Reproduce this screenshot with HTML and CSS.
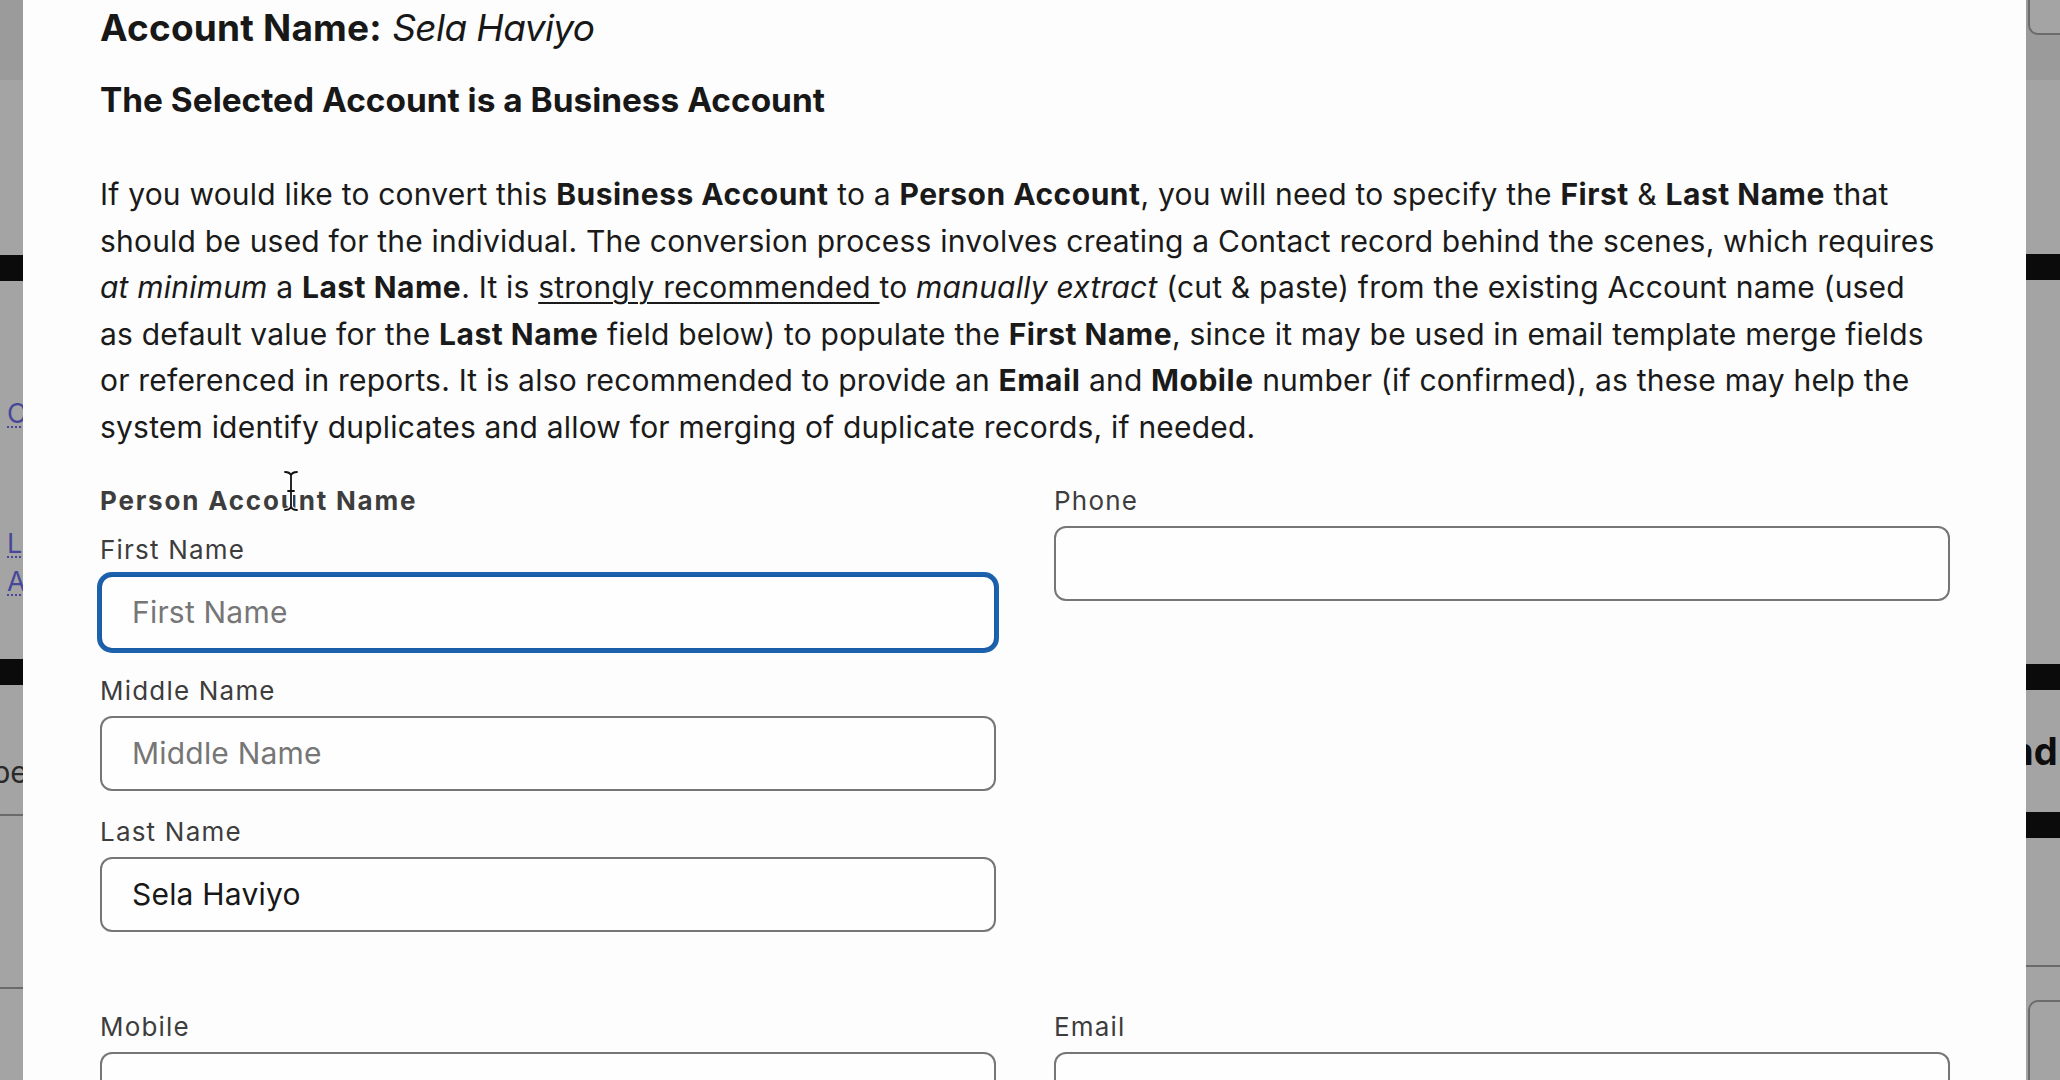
FILE: index.html
```html
<!DOCTYPE html>
<html lang="en">
<head>
<meta charset="utf-8">
<title>Convert Account</title>
<link rel="stylesheet" href="styles.css">
</head>
<body>
<div class="page">
  <aside class="strip strip-left">
    <div class="band"></div>
    <div class="bar bar-1"></div>
    <a class="ghost-link link-c">C</a>
    <a class="ghost-link link-l">L</a>
    <a class="ghost-link link-a">A</a>
    <div class="bar bar-2"></div>
    <div class="ghost-text">pe</div>
    <div class="rule rule-1"></div>
    <div class="rule rule-2"></div>
  </aside>

  <main class="modal">
    <h1 class="title"><strong>Account Name:</strong> <em>Sela Haviyo</em></h1>
    <h2 class="subtitle">The Selected Account is a Business Account</h2>
    <p class="intro">If you would like to convert this <b>Business Account</b> to a <b>Person Account</b>, you will need to specify the <b>First</b> &amp; <b>Last Name</b> that should be used for the individual. The conversion process involves creating a Contact record behind the scenes, which requires <i>at minimum</i> a <b>Last Name</b>. It is <u>strongly recommended </u>to <i>manually extract</i> (cut &amp; paste) from the existing Account name (used as&nbsp;default value for the <b>Last Name</b> field below) to populate the <b>First Name</b>, since it may be used in email template merge fields or referenced in reports. It is also recommended to provide an <b>Email</b> and <b>Mobile</b> number (if confirmed), as these may help the system identify duplicates and allow for merging of duplicate records, if needed.</p>

    <div class="form-grid">
      <div class="col">
        <div class="group-title">Person Account Name</div>
        <div class="field">
          <label class="label" for="fn">First Name</label>
          <input id="fn" class="input focused" type="text" placeholder="First Name">
        </div>
        <div class="field">
          <label class="label" for="mn">Middle Name</label>
          <input id="mn" class="input" type="text" placeholder="Middle Name">
        </div>
        <div class="field">
          <label class="label" for="ln">Last Name</label>
          <input id="ln" class="input" type="text" value="Sela Haviyo">
        </div>
      </div>
      <div class="col">
        <div class="field">
          <label class="label" for="ph">Phone</label>
          <input id="ph" class="input" type="text">
        </div>
      </div>
      <div class="col">
        <div class="field">
          <label class="label" for="mo">Mobile</label>
          <input id="mo" class="input" type="text">
        </div>
      </div>
      <div class="col">
        <div class="field">
          <label class="label" for="em">Email</label>
          <input id="em" class="input" type="text">
        </div>
      </div>
    </div>

    <svg class="cursor" width="18" height="42" viewBox="0 0 18 42" aria-hidden="true">
      <path d="M3 2 C6 2 8 3 9 5 C10 3 12 2 15 2 M9 5 V37 M3 40 C6 40 8 39 9 37 C10 39 12 40 15 40 M6 21 H12" fill="none" stroke="#fff" stroke-width="4" stroke-linecap="round"/>
      <path d="M3 2 C6 2 8 3 9 5 C10 3 12 2 15 2 M9 5 V37 M3 40 C6 40 8 39 9 37 C10 39 12 40 15 40 M6 21 H12" fill="none" stroke="#111" stroke-width="1.8" stroke-linecap="round"/>
    </svg>
  </main>

  <aside class="strip strip-right">
    <div class="band"><div class="ghost-btn top-btn"></div></div>
    <div class="bar bar-1r"></div>
    <div class="bar bar-2r"></div>
    <div class="ghost-bold">nd</div>
    <div class="bar bar-3r"></div>
    <div class="rule rule-3"></div>
    <div class="ghost-btn bottom-btn"></div>
  </aside>
</div>
</body>
</html>
```

FILE: styles.css
```css
* { box-sizing: border-box; }

html, body {
  margin: 0;
  padding: 0;
}

body {
  width: 2060px;
  height: 1080px;
  overflow: hidden;
  background: #a4a4a4;
  font-family: "Inter", "Noto Sans", "Liberation Sans", sans-serif;
  color: #1a1a1a;
}

.page {
  display: flex;
  width: 2060px;
  height: 1080px;
}

/* ---------- greyed-out page behind the modal ---------- */
.strip {
  display: flex;
  flex-direction: column;
  overflow: hidden;
  background: #a4a4a4;
}

.strip-left {
  flex: 0 0 23px;
}

.strip-right {
  flex: 1 1 auto;
}

.band {
  height: 80px;
  flex: 0 0 80px;
  background: #9b9b9b;
}

.bar {
  height: 26px;
  flex: 0 0 26px;
  background: #0b0b0b;
}

.bar-1 { margin-top: 175px; }
.bar-2 { margin-top: 63px; }

.ghost-link {
  display: block;
  flex: 0 0 auto;
  width: 30px;
  margin-left: 7px;
  font-size: 27px;
  line-height: 24px;
  height: 26px;
  color: #47479a;
  border-bottom: 2px dotted #47479a;
  overflow: hidden;
  white-space: nowrap;
}

.link-c { margin-top: 121px; }
.link-l { margin-top: 104px; }
.link-a { margin-top: 12px; }

.ghost-text {
  flex: 0 0 auto;
  margin-top: 72px;
  margin-left: -8px;
  font-size: 30px;
  line-height: 30px;
  color: #2a2a2a;
  white-space: nowrap;
}

.rule {
  height: 2px;
  flex: 0 0 2px;
  background: #6a6a6a;
}

.rule-1 { margin-top: 27px; }
.rule-2 { margin-top: 171px; }

.ghost-btn {
  flex: 0 0 auto;
  margin-left: 2px;
  width: 60px;
  border: 2px solid #6c6c6c;
  border-radius: 10px;
  background: #a4a4a4;
}

.top-btn {
  height: 50px;
  margin-top: -15px;
}

.bar-1r { margin-top: 174px; }
.bar-2r { margin-top: 384px; }

.ghost-bold {
  flex: 0 0 auto;
  margin-top: 44px;
  margin-left: -16px;
  font-size: 38px;
  line-height: 34px;
  font-weight: 700;
  color: #0d0d0d;
  white-space: nowrap;
}

.bar-3r { margin-top: 44px; }
.rule-3 { margin-top: 127px; }

.bottom-btn {
  height: 120px;
  flex: 0 0 120px;
  margin-top: 33px;
}

/* ---------- modal ---------- */
.modal {
  position: relative;
  flex: 0 0 2003px;
  background: #fdfdfd;
  padding: 6px 76px 0 77px;
}

.title {
  margin: 0;
  font-size: 37px;
  line-height: 44px;
  font-weight: 400;
  color: #181818;
}

.title strong {
  font-weight: 700;
  letter-spacing: 0.2px;
}

.title em {
  font-style: italic;
  letter-spacing: -0.6px;
}

.subtitle {
  margin: 30px 0 0;
  font-size: 33.4px;
  line-height: 40px;
  font-weight: 700;
  color: #181818;
}

.intro {
  margin: 51px 0 0;
  font-size: 30px;
  line-height: 46.6px;
  letter-spacing: 0.2px;
  color: #1a1a1a;
}

.intro b {
  font-weight: 700;
  letter-spacing: 0.5px;
}

.intro u {
  text-decoration-thickness: 2px;
  text-underline-offset: 4px;
}

.form-grid {
  margin-top: 35px;
  display: grid;
  grid-template-columns: 1fr 1fr;
  column-gap: 58px;
  row-gap: 80px;
}

.col {
  display: flex;
  flex-direction: column;
  gap: 26px;
}

.group-title {
  font-size: 26px;
  line-height: 30px;
  font-weight: 700;
  letter-spacing: 1.8px;
  color: #3d3d3d;
  margin-bottom: -7px;
}

.field {
  display: flex;
  flex-direction: column;
}

.label {
  font-size: 26px;
  line-height: 30px;
  letter-spacing: 1.2px;
  color: #3d3d3d;
  margin-bottom: 10px;
}

.input {
  height: 75px;
  width: 100%;
  border: 2px solid #767676;
  border-radius: 12px;
  background: #fefefe;
  padding: 0 30px;
  font-family: "Inter", "Noto Sans", "Liberation Sans", sans-serif;
  font-size: 30px;
  letter-spacing: 0.2px;
  color: #181818;
  outline: none;
}

.input::placeholder {
  color: #767676;
}

.input.focused {
  border-color: #1b5ca6;
  box-shadow: 0 0 0 3px #1d62ad;
}

.cursor {
  position: absolute;
  left: 259px;
  top: 470px;
}
```
